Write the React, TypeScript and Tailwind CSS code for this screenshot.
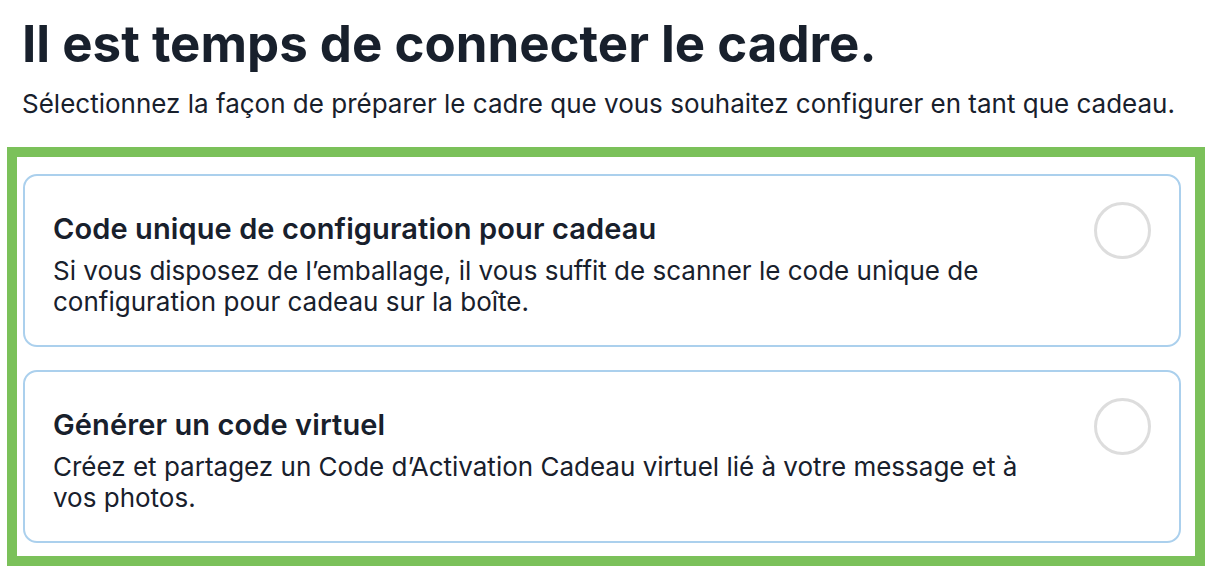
import React from 'react';

const OPTIONS = [
  {
    title: 'Code unique de configuration pour cadeau',
    body: 'Si vous disposez de l’emballage, il vous suffit de scanner le code unique de configuration pour cadeau sur la boîte.',
  },
  {
    title: 'Générer un code virtuel',
    body: 'Créez et partagez un Code d’Activation Cadeau virtuel lié à votre message et à vos photos.',
  },
];

const App: React.FC = () => {
  return (
    <div className="w-[1216px] h-[584px] bg-white text-[#18202c] font-['Inter',sans-serif] overflow-hidden">
      <div className="pl-[22px] pt-[14px]">
        <h1 className="text-[51px] leading-[60px] font-bold">Il est temps de connecter le cadre.</h1>
        <p className="mt-[14px] text-[26px] leading-[32px]">
          Sélectionnez la façon de préparer le cadre que vous souhaitez configurer en tant que cadeau.
        </p>
      </div>

      <div className="mt-[27px] ml-[7px] w-[1198px] border-[10px] border-[#7bc15a] pl-[6px] pr-[14px] pt-[17px] pb-[13px] flex flex-col gap-[23px]">
        {OPTIONS.map((opt, i) => (
          <div
            key={i}
            className="h-[173px] rounded-[14px] border-[2.5px] border-[#abd0ed] pl-[28px] pr-[28px] flex items-start"
          >
            <div className="flex-1 pt-[35px] pr-[54px]">
              <h3 className="text-[29px] leading-[36px] font-semibold tracking-[0.1px]">{opt.title}</h3>
              <p className="mt-[8px] text-[26px] leading-[31px]">{opt.body}</p>
            </div>
            <div className="mt-[26px] w-[57px] h-[57px] rounded-full border-[3px] border-[#dddddd] shrink-0" />
          </div>
        ))}
      </div>
    </div>
  );
};

export default App;
